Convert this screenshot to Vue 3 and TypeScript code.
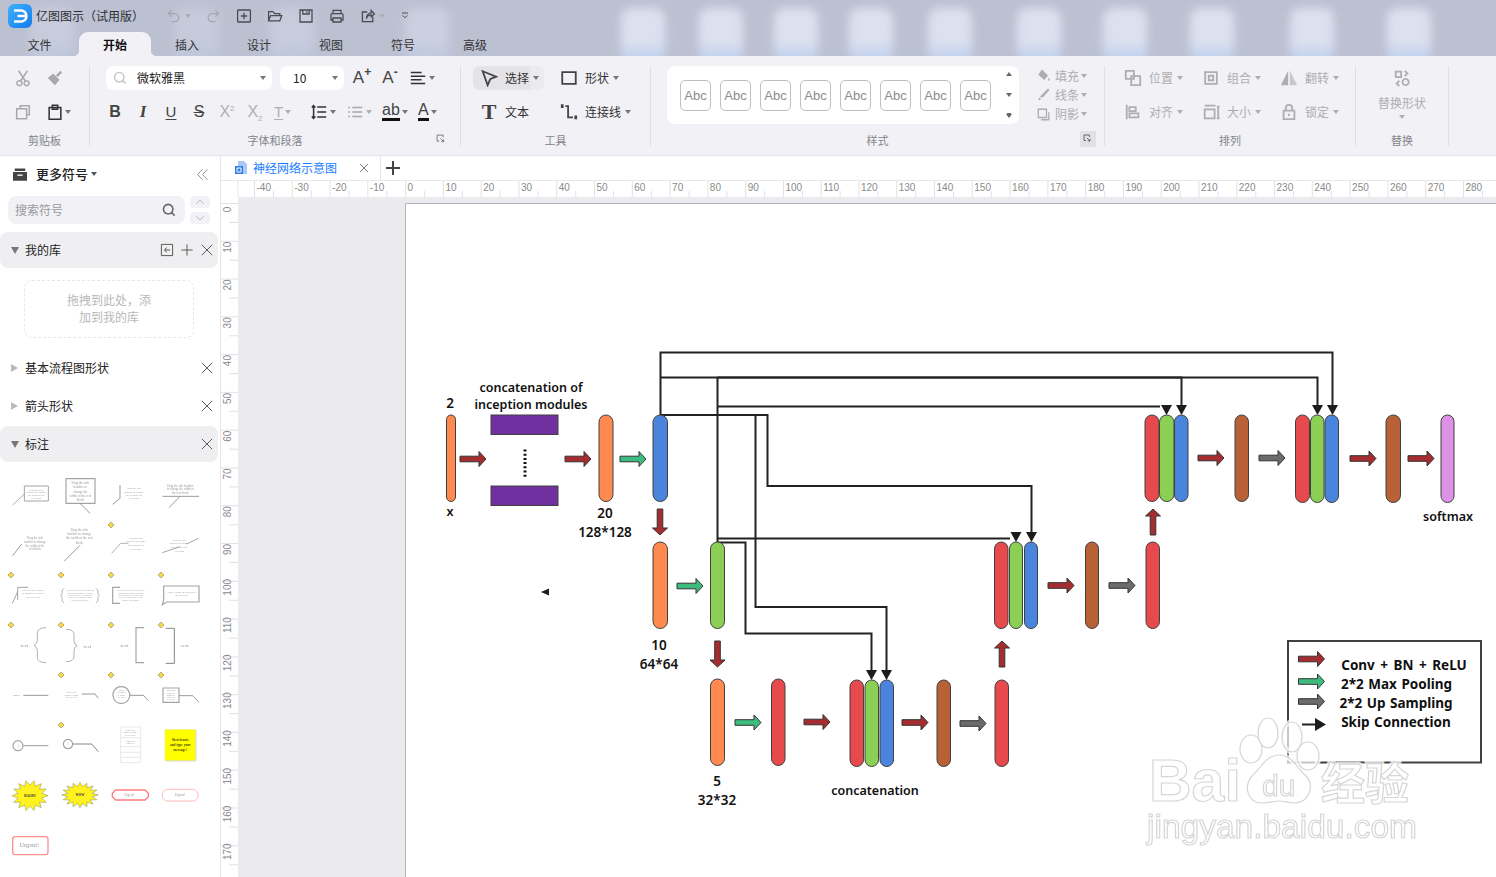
<script setup lang="ts">
// 亿图图示 main window with the neural network diagram open

const I: Record<string, string> = {
  undo: 'M7 3 3 7l4 4M3 7h8a5 5 0 0 1 0 10H7',
  redo: 'M13 3l4 4-4 4M17 7H9a5 5 0 0 0 0 10h4',
  plus: 'M3 2.500h14a1 1 0 0 1 1 1v13a1 1 0 0 1-1 1H3a1 1 0 0 1-1-1v-13a1 1 0 0 1 1-1zM10 6v8M6 10h8',
  open: 'M2 16V4.500h5.500l2 2.500H16v2.500M2 16l2.500-6.500H18.500L16 16z',
  save: 'M2.500 2.500h15v15h-15zM6 2.500v5h8v-5M11 4v2',
  print: 'M5 7V3h10v4M5 15H2.500V8.500a1.500 1.500 0 0 1 1.500-1.500h12a1.500 1.500 0 0 1 1.500 1.500V15H15M5 12.500h10v5H5z',
  share: 'M16 11v6H3V5h6M8 13c0-4 3-7 6-7V3l4 4.500L14 11V8.500c-3 0-5 2-6 4.500z',
  more: 'M5 5h10M6 9l4 4 4-4',
  cut: 'M5 2l7.500 11M15 2 7.500 13M6 13a2.800 2.800 0 1 0 .01 0zM14 13a2.800 2.800 0 1 0 .01 0z',
  brush: 'M2 10l6-5 7 7-5 6zM11 7l5-5 2 2-5 5',
  copy: 'M7 6V3h10v10h-3M3 6.500h11v11H3z',
  paste: 'M3.500 5h13v13h-13zM7 2.500h6V7H7z',
  search: 'M9 3a6 6 0 1 0 .01 0zM13.500 13.500 17 17',
  align: 'M2 4h12M2 8h16M2 12h12M2 16h16',
  spacing: 'M8 4.500h10M8 10h10M8 15.500h10M4 3v14M2 5l2-2 2 2M2 15l2 2 2-2',
  list: 'M7 5h11M7 10h11M7 15h11M2.500 5h2M2.500 10h2M2.500 15h2',
  cursor: 'M3 2.500l15 6-6.500 2.500-3 7z',
  rect: 'M2.500 3.500h15v13h-15z',
  conn: 'M2 2.500h1v2H2zM6 3.500h3V16h5.500M17 15h1v2h-1z',
  expand: 'M2 2h11v4M2 2v11h4M8 8l6 6M14 9.500V14H9.500',
  pos: 'M2 2h9v9H2zM8 8h10v10H8z',
  group: 'M3.500 3.500h13v13h-13zM7.500 7.500h5v5h-5zM3.500 2.500v.1M16.500 2.500v.1M3.500 17.400v.1M16.500 17.400v.1',
  alignl: 'M3 2v16M6 4.500h7v4.500H6zM6 11.500h10v4.500H6z',
  size: 'M3 3h12M3 7h11v10H3zM18 4v13M16.500 4h3M16.500 17h3',
  lock: 'M4 8.500h12v9.500H4zM6.500 8.500V5.500a3.500 3.500 0 0 1 7 0v3M10 12v2.500',
  swap: 'M3 3h6v6H3zM14 11a3.500 3.500 0 1 0 .01 0zM13 2l3 3-3 3M7 13l-3 3 3 3',
  shadow: 'M3 3h11v11H3zM17 7v10H7',
  close: 'M3.500 3.500l13 13M16.500 3.500l-13 13',
  add: 'M10 3v14M3 10h14',
  back: 'M3 3h14v14H3zM14 10H7M9.500 7 7 10l2.500 3',
  fold: 'M10 3 3.500 10l6.500 7M16.500 3 10 10l6.500 7',
  up: 'M3 13l7-7 7 7',
  down: 'M3 7l7 7 7-7',
}

const tabs = ['文件', '开始', '插入', '设计', '视图', '符号', '高级']
const blobs = [
  { x: 621, o: 1 }, { x: 699, o: 1 }, { x: 774, o: 1 }, { x: 849, o: 1 }, { x: 928, o: 1 },
  { x: 1017, o: 1 }, { x: 1103, o: 1 }, { x: 1190, o: 1 }, { x: 1290, o: 1 }, { x: 1387, o: 1 },
  { x: 30, o: 0.35 }, { x: 175, o: 0.3 }, { x: 270, o: 0.35 }, { x: 405, o: 0.45 },
]
const arrange = [
  { icon: 'pos', t: '位置' }, { icon: 'group', t: '组合' }, { icon: 'flip', t: '翻转' },
  { icon: 'alignl', t: '对齐' }, { icon: 'size', t: '大小' }, { icon: 'lock', t: '锁定' },
]
const restyle = [
  { icon: 'bucket', t: '填充' }, { icon: 'pen', t: '线条' }, { icon: 'shadow', t: '阴影' },
]

const topTicks = Array.from({ length: 33 }, (_, i) => ({ v: -40 + i * 10, x: 254.5 + i * 37.78 }))
const leftTicks = Array.from({ length: 18 }, (_, i) => ({ v: i * 10, y: 203.5 + i * 37.78 }))

// diagram, in window coordinates
const ORANGE = '#fe8a50'
const RED = '#e64a4c'
const GREEN = '#8bd055'
const BLUE = '#4a84dc'
const BROWN = '#b86136'
const bars = [
  [446.5, 415, 9, 86.5, ORANGE], [599, 415, 14, 86.5, ORANGE], [653, 415, 14.5, 86.5, BLUE],
  [653, 542, 14.5, 86.5, ORANGE], [710.5, 542, 14, 86.5, GREEN],
  [710.5, 679, 14, 86.5, ORANGE], [771.5, 679, 13.5, 86.5, RED],
  [850, 680, 13.5, 86.5, RED], [865, 680, 13.5, 86.5, GREEN], [880, 680, 13.5, 86.5, BLUE],
  [937, 680, 13.5, 86.5, BROWN], [995, 680, 13.5, 86.5, RED],
  [994.5, 542, 13.5, 86.5, RED], [1009.5, 542, 13, 86.5, GREEN], [1024.5, 542, 13, 86.5, BLUE],
  [1085.5, 542, 13, 86.5, BROWN], [1146, 542, 13.5, 86.5, RED],
  [1145, 415, 14, 86.5, RED], [1159.5, 415, 14.5, 86.5, GREEN], [1174.5, 415, 13.5, 86.5, BLUE],
  [1235, 415, 13.5, 86.5, BROWN],
  [1295.5, 415, 14, 87.5, RED], [1310.5, 415, 13.5, 87.5, GREEN], [1325, 415, 13.5, 87.5, BLUE],
  [1386, 415, 14.5, 87.5, BROWN], [1441, 415, 13, 87.5, '#dd92e6'],
].map(([x, y, w, h, fill]) => ({ x, y, w, h, fill })) as { x: number; y: number; w: number; h: number; fill: string }[]

const C = { r: '#a52d30', g: '#3dbd7d', k: '#6c6c6c' }
const arrows = [
  [473, 459, C.r, 0], [578, 459, C.r, 0], [633, 459, C.g, 0], [660, 522, C.r, 90], [690, 586, C.g, 0],
  [717.5, 654, C.r, 90], [748, 722.5, C.g, 0], [817, 722, C.r, 0], [915, 722.5, C.r, 0], [973, 723.5, C.k, 0],
  [1002, 654, C.r, -90], [1061, 585.5, C.r, 0], [1122, 585.5, C.k, 0], [1153, 522, C.r, -90],
  [1211, 458, C.r, 0], [1272, 458, C.k, 0], [1363, 458.5, C.r, 0], [1421, 458.5, C.r, 0],
  [1311.5, 659, C.r, 0], [1311.5, 681.5, C.g, 0], [1311.5, 701.5, C.k, 0],
].map(([x, y, c, r]) => ({ x, y, c, r })) as { x: number; y: number; c: string; r: number }[]

const skips = [
  'M660.5 415V352.500H1332.500V406',
  'M660.500 377.500H1317.500V406',
  'M717.500 377.500H1181.500V406',
  'M717.500 542V377.500',
  'M717.500 406.500H1160',
  'M660.500 415H767.500V486H1031.500V534',
  'M660.500 415H755.500V607H886.500V671',
  'M717.500 538.500H1010',
  'M717.500 542.500H745.500V633.500H871.500V671',
  'M1302 724.500H1316',
]
const heads = [
  [1166.5, 415], [1181.5, 415], [1317.5, 415], [1332.5, 415],
  [1016, 542], [1031.5, 542], [871.5, 680], [886.5, 680],
].map(([x, y]) => `M${x - 5.5} ${y - 10}h11L${x} ${y}z`)

const labels = [
  ['2', 450, 403], ['concatenation of', 531, 387.5], ['inception modules', 531, 404.5], ['x', 450, 511],
  ['20', 605, 513], ['128*128', 605, 532], ['10', 659, 645], ['64*64', 659, 664], ['5', 717, 781],
  ['32*32', 717, 800], ['concatenation', 875, 790], ['softmax', 1448, 516],
].map(([t, x, y]) => ({ t, x, y, big: /^\d/.test(t as string) })) as { t: string; x: number; y: number; big: boolean }[]
const legend = [
  ['Conv + BN + ReLU', 1404, 665, 2], ['2*2 Max Pooling', 1396.5, 684, 1],
  ['2*2 Up Sampling', 1396, 703, 1], ['Skip Connection', 1396, 722, 1],
].map(([t, x, y, ws]) => ({ t, x, y, ws })) as { t: string; x: number; y: number; ws: number }[]

// shape gallery of the 标注 library, drawn at 3x in its viewBox
function burst(cx: number, cy: number, rx: number, ry: number, n: number) {
  const pts: string[] = []
  for (let i = 0; i < n * 2; i++) {
    const k = i % 2 ? 0.68 : 1
    const a = (Math.PI * i) / n
    pts.push(`${(cx + rx * k * Math.cos(a)).toFixed(1)},${(cy + ry * k * Math.sin(a)).toFixed(1)}`)
  }
  return `M${pts.join('L')}z`
}
const G = '#a3a3a3'
const D = '#858585'
const galleryPaths = [
  { d: 'M73 48H145V93H73z', c: G, w: 3 }, { d: 'M73 72 38 105', c: D, w: 2 },
  { d: 'M198 26H285V100H198z', c: G, w: 3.5 }, { d: 'M240 100 270 130', c: D, w: 2.5 },
  { d: 'M360 45V85L338 103', c: D, w: 2.5 },
  { d: 'M487 79H597M540 79 507 113', c: D, w: 2.5 },
  { d: 'M65 222 38 257', c: D, w: 2.5 }, { d: 'M240 226 193 273', c: D, w: 2.5 },
  { d: 'M335 250 362 220H385', c: G, w: 2.5 }, { d: 'M487 248 540 230M560 222 595 205', c: G, w: 3 },
  { d: 'M85 352H53V390M53 365 37 400', c: G, w: 3 },
  { d: 'M192 355Q186 358 186 368V372L182 376L186 380V388Q186 396 192 398M288 355Q294 358 294 368V372L298 376L294 380V388Q294 396 288 398', c: G, w: 2.5 },
  { d: 'M360 352H338V400H360', c: G, w: 3.5 },
  { d: 'M491 348H597V396H500L487 404 491 390z', c: G, w: 3.5 },
  { d: 'M138 473Q112 473 112 490V510Q112 522 102 526Q112 530 112 542V562Q112 578 138 578', c: G, w: 2.5 },
  { d: 'M198 478Q222 478 222 494V512Q222 524 232 527Q222 530 222 542V560Q222 575 198 575', c: G, w: 2.5 },
  { d: 'M432 473H408V578H432', c: G, w: 3.5 }, { d: 'M497 475H523V580H497', c: D, w: 3 },
  { d: 'M70 676H145', c: D, w: 2.5 }, { d: 'M245 672H285L295 685', c: D, w: 2.5 },
  { d: 'M364 650a25 25 0 1 0 .01 0z', c: G, w: 3.5 }, { d: 'M390 676H430L445 692', c: D, w: 2.5 },
  { d: 'M489 654H537V697H489z', c: G, w: 3.5 }, { d: 'M537 677H578L597 697', c: D, w: 2.5 },
  { d: 'M54 812a15 15 0 1 0 .01 0z', c: G, w: 3.5 }, { d: 'M70 827H145', c: D, w: 2.5 },
  { d: 'M204 808a14 14 0 1 0 .01 0z', c: G, w: 3.5 }, { d: 'M218 822H275L295 845', c: D, w: 3 },
  { d: 'M362 771H421V878H362zM362 803H421M362 830H421M362 847H421M362 862H421', c: '#dcdcdc', w: 2 },
  { d: 'M497 781H588V873H497z', c: '#dddddd', f: '#dddddd', w: 3 },
  { d: 'M495 779H586V871H495z', c: '#e6e646', f: '#ffff00', w: 1 },
  { d: burst(90, 977, 54, 46, 14), c: '#8a8a50', f: '#fff21f', w: 1.5 },
  { d: burst(240, 975, 55, 38, 16), c: '#8a8a50', f: '#fff21f', w: 1.5 },
  { d: 'M347 960H435L445 970V980L435 990H347L337 980V970z', c: '#ff7c7c', w: 4 },
  { d: 'M503 958H578a16 17 0 0 1 0 35H503a16 17 0 0 1 0-35z', c: '#ffb8b8', w: 3 },
  { d: 'M46 1100H136a8 8 0 0 1 8 8V1146a8 8 0 0 1-8 8H46a8 8 0 0 1-8-8V1108a8 8 0 0 1 8-8z', c: '#ff9090', w: 4 },
]
const DRAG = ['Drag the side', 'handles to change', 'the width of the', 'text block']
const blocks = [
  { x: 109, y: 62, s: 8, lh: 8, lines: DRAG }, { x: 241, y: 42, s: 10, lh: 13, lines: ['Drag the side', 'handles to', 'change the', 'width of the text', 'block'] },
  { x: 402, y: 58, s: 8, lh: 10, lines: DRAG }, { x: 541, y: 50, s: 9, lh: 11, lines: ['Drag the side handles', 'to change the width of', 'the text block'] },
  { x: 105, y: 208, s: 9, lh: 11, lines: DRAG }, { x: 238, y: 182, s: 10, lh: 13, lines: ['Drag the side', 'handles to change', 'the width of the text', 'block'] },
  { x: 408, y: 206, s: 8, lh: 11, lines: DRAG }, { x: 537, y: 212, s: 8, lh: 11, lines: DRAG },
  { x: 100, y: 363, s: 7.500, lh: 10, lines: ['Drag the side handles', 'to change the width of', 'the text block'] },
  { x: 240, y: 364, s: 6, lh: 7, lines: ['The text of this callout is large and', 'Drag the side handles to change', 'the width of the text block and', 'the text of this callout is large', 'Drag the side handles'] },
  { x: 392, y: 364, s: 6, lh: 7, lines: ['The text of this callout is large and', 'Drag the side handles to change', 'the width of the text block and', 'the text of this callout is large', 'Drag the side handles'] },
  { x: 545, y: 369, s: 7, lh: 8, lines: ['Drag to change the position of', 'the text block'] },
  { x: 73, y: 530, s: 15, lh: 14, lines: ['text'] }, { x: 262, y: 533, s: 15, lh: 14, lines: ['text'] },
  { x: 373, y: 532, s: 15, lh: 14, lines: ['text'] }, { x: 555, y: 532, s: 15, lh: 14, lines: ['text'] },
  { x: 50, y: 678, s: 8, lh: 8, lines: ['sample'] }, { x: 215, y: 670, s: 6, lh: 7, lines: ['Drag the side', 'handles to change', 'the text block'] },
  { x: 364, y: 663, s: 5.500, lh: 7, lines: ['Drag the', 'side handles', 'to change', 'the block'] },
  { x: 513, y: 664, s: 5.500, lh: 6.500, lines: ['Drag the side', 'handles to', 'change the', 'width of the', 'text block'] },
  { x: 54, y: 831, s: 9, lh: 9, lines: ['1'] }, { x: 204, y: 826, s: 9, lh: 9, lines: ['1'] },
  { x: 391, y: 783, s: 5.500, lh: 7, lines: ['Drag the side', 'handles to change', 'the text block'] },
  { x: 391, y: 816, s: 5.500, lh: 7, lines: ['Drag the side', 'handles to'] },
  { x: 541, y: 813, s: 10.500, lh: 15, c: '#4a4a00', b: 700, lines: ['Sketch note', 'and type your', 'message!'] },
  { x: 90, y: 981, s: 10, lh: 9, c: '#333', b: 700, lines: ['BOOM!'] }, { x: 240, y: 979, s: 10, lh: 9, c: '#333', b: 700, lines: ['WOW'] },
  { x: 388, y: 979, s: 10, lh: 9, lines: ['Urgent!'] }, { x: 540, y: 979, s: 10, lh: 9, lines: ['Urgent!'] },
  { x: 88, y: 1132, s: 19, lh: 18, lines: ['Urgent!'] },
]
const galleryText = blocks.flatMap((b) => b.lines.map((t, i) => ({
  t, x: b.x, y: b.y + i * b.lh, s: b.s, c: b.c ?? '#989898', b: b.b ?? 400,
})))
const diamonds = [
  [333, 165], [33, 315], [183, 315], [333, 315], [483, 315], [33, 465], [183, 465], [333, 465], [483, 465],
  [183, 615], [333, 615], [483, 615], [183, 765],
]
</script>

<template>
  <div class="app">
    <header class="title">
      <i v-for="b in blobs" :key="b.x" class="blob" :style="{ left: b.x + 'px', opacity: b.o }"></i>
      <div class="title-row">
        <span class="logo">
          <svg viewBox="0 0 24 24"><path d="M6 6.500h7a5.500 5.500 0 0 1 0 11H6M9.500 12H18" /></svg>
        </span>
        <span class="app-name">亿图图示（试用版）</span>
        <div class="qat">
          <span class="qb first dim"><svg class="ic" viewBox="0 0 20 20"><path :d="I.undo" /></svg><i class="caret light"></i></span>
          <span class="qb dim"><svg class="ic" viewBox="0 0 20 20"><path :d="I.redo" /></svg></span>
          <span class="qb"><svg class="ic" viewBox="0 0 20 20"><path :d="I.plus" /></svg></span>
          <span class="qb"><svg class="ic" viewBox="0 0 20 20"><path :d="I.open" /></svg></span>
          <span class="qb"><svg class="ic" viewBox="0 0 20 20"><path :d="I.save" /></svg></span>
          <span class="qb"><svg class="ic" viewBox="0 0 20 20"><path :d="I.print" /></svg></span>
          <span class="qb wide"><svg class="ic" viewBox="0 0 20 20"><path :d="I.share" /></svg><i class="caret light"></i></span>
          <span class="qb"><svg class="ic small" viewBox="0 0 20 20"><path :d="I.more" /></svg></span>
        </div>
      </div>
      <nav class="tabs">
        <span v-for="t in tabs" :key="t" class="tab" :class="{ active: t === '开始' }">{{ t }}</span>
      </nav>
    </header>

    <section class="ribbon">
      <div class="grp g-clip">
        <div class="rows">
          <div class="row dim">
            <span class="ib"><svg class="ic" viewBox="0 0 20 20"><path :d="I.cut" /></svg></span>
            <span class="ib"><svg class="ic" viewBox="0 0 20 20"><path class="solid" :d="I.brush" /></svg></span>
          </div>
          <div class="row">
            <span class="ib dim"><svg class="ic" viewBox="0 0 20 20"><path :d="I.copy" /></svg></span>
            <span class="ib c"><svg class="ic" viewBox="0 0 20 20"><path :d="I.paste" /></svg><i class="caret"></i></span>
          </div>
        </div>
        <div class="glabel">剪贴板</div>
      </div>
      <i class="sep"></i>

      <div class="grp g-font">
        <div class="rows">
          <div class="row">
            <div class="sel font">
              <svg class="ic sicon" viewBox="0 0 20 20"><path :d="I.search" /></svg>
              <span>微软雅黑</span><i class="caret push"></i>
            </div>
            <div class="sel size"><span>10</span><i class="caret push"></i></div>
            <span class="ib grow"><span class="glyph">A<sup>+</sup></span></span>
            <span class="ib grow"><span class="glyph">A<sup>-</sup></span></span>
            <span class="ib c"><svg class="ic" viewBox="0 0 20 20"><path :d="I.align" /></svg><i class="caret"></i></span>
          </div>
          <div class="row fmt">
            <span class="ib"><b class="glyph">B</b></span>
            <span class="ib"><i class="glyph it">I</i></span>
            <span class="ib"><span class="glyph un">U</span></span>
            <span class="ib"><span class="glyph st">S</span></span>
            <span class="ib dim"><span class="glyph">X<sup>2</sup></span></span>
            <span class="ib dim"><span class="glyph">X<sub>2</sub></span></span>
            <span class="ib c dim"><span class="glyph un thin">T</span><i class="caret light"></i></span>
            <span class="ib c"><svg class="ic" viewBox="0 0 20 20"><path :d="I.spacing" /></svg><i class="caret"></i></span>
            <span class="ib c dim"><svg class="ic" viewBox="0 0 20 20"><path :d="I.list" /></svg><i class="caret light"></i></span>
            <span class="ib c"><span class="glyph bar">ab</span><i class="caret"></i></span>
            <span class="ib c"><span class="glyph bar">A</span><i class="caret"></i></span>
          </div>
        </div>
        <div class="glabel">字体和段落
          <svg class="ic corner" viewBox="0 0 20 20"><path :d="I.expand" /></svg>
        </div>
      </div>
      <i class="sep"></i>

      <div class="grp g-tool">
        <div class="rows">
          <div class="row">
            <span class="tool first on"><svg class="ic heavy" viewBox="0 0 20 20"><path :d="I.cursor" /></svg><em>选择</em><i class="caret"></i></span>
            <span class="tool"><svg class="ic heavy" viewBox="0 0 20 20"><path :d="I.rect" /></svg><em>形状</em><i class="caret"></i></span>
          </div>
          <div class="row">
            <span class="tool first"><span class="glyph big-t">T</span><em>文本</em></span>
            <span class="tool"><svg class="ic heavy" viewBox="0 0 20 20"><path :d="I.conn" /></svg><em>连接线</em><i class="caret"></i></span>
          </div>
        </div>
        <div class="glabel">工具</div>
      </div>
      <i class="sep"></i>

      <div class="grp g-style">
        <div class="style-row">
          <div class="gallery-panel">
            <span v-for="n in 8" :key="n" class="abc">Abc</span>
            <div class="scroll">
              <i class="caret upc"></i><i class="caret"></i><i class="caret lined"></i>
            </div>
          </div>
          <div class="restyle">
            <span v-for="r in restyle" :key="r.t" class="rs">
              <svg v-if="r.icon === 'bucket'" class="ic" viewBox="0 0 20 20"><path class="solid" d="M8 2l8 8-5 6-8-7zM17 13c1 1.500 2 3 .5 4s-2-2.500-.5-4z" /></svg>
              <svg v-else-if="r.icon === 'pen'" class="ic" viewBox="0 0 20 20"><path class="solid" d="M16 2l2 2-9 10-4-1zM4 14l3 2-4 2z" /></svg>
              <svg v-else class="ic" viewBox="0 0 20 20"><path :d="I.shadow" /></svg>
              <em>{{ r.t }}</em><i class="caret light"></i>
            </span>
          </div>
        </div>
        <div class="glabel">样式
          <span class="corner-box"><svg class="ic" viewBox="0 0 20 20"><path :d="I.expand" /></svg></span>
        </div>
      </div>
      <i class="sep"></i>

      <div class="grp g-arrange">
        <div class="arr-grid">
          <span v-for="a in arrange" :key="a.t" class="tool grey">
            <svg v-if="a.icon === 'flip'" class="ic" viewBox="0 0 20 20"><path class="solid" d="M9 2v16H1z" /><path class="solid half" d="M11 2v16h8z" /></svg>
            <svg v-else class="ic heavy" viewBox="0 0 20 20"><path :d="I[a.icon]" /></svg>
            <em>{{ a.t }}</em><i class="caret light"></i>
          </span>
        </div>
        <div class="glabel">排列</div>
      </div>
      <i class="sep"></i>

      <div class="grp g-swap">
        <div class="swap">
          <svg class="ic heavy" viewBox="0 0 20 20"><path :d="I.swap" /></svg>
          <span>替换形状</span>
          <i class="caret light"></i>
        </div>
        <div class="glabel">替换</div>
      </div>
      <i class="sep"></i>
    </section>

    <div class="work">
      <aside class="side">
        <div class="side-head">
          <svg class="box" viewBox="0 0 16 14"><path d="M2 0h12v3H2zM0 4h16v10H0z" /><path class="slot" d="M5 7h6v1.500H5z" /></svg>
          <span class="more">更多符号</span><i class="caret dark"></i>
          <svg class="ic fold" viewBox="0 0 20 20"><path :d="I.fold" /></svg>
        </div>
        <div class="search-row">
          <div class="search">
            <span>搜索符号</span>
            <svg class="ic" viewBox="0 0 20 20"><path :d="I.search" /></svg>
          </div>
          <div class="updown">
            <span><svg class="ic" viewBox="0 0 20 20"><path :d="I.up" /></svg></span>
            <span><svg class="ic" viewBox="0 0 20 20"><path :d="I.down" /></svg></span>
          </div>
        </div>

        <div class="sec open first">
          <i class="tri down"></i><span class="name">我的库</span>
          <svg class="ic act" viewBox="0 0 20 20"><path :d="I.back" /></svg>
          <svg class="ic act" viewBox="0 0 20 20"><path :d="I.add" /></svg>
          <svg class="ic act" viewBox="0 0 20 20"><path :d="I.close" /></svg>
        </div>
        <div class="drop">拖拽到此处，添<br />加到我的库</div>
        <div class="sec after-drop">
          <i class="tri"></i><span class="name">基本流程图形状</span>
          <svg class="ic act" viewBox="0 0 20 20"><path :d="I.close" /></svg>
        </div>
        <div class="sec">
          <i class="tri"></i><span class="name">箭头形状</span>
          <svg class="ic act" viewBox="0 0 20 20"><path :d="I.close" /></svg>
        </div>
        <div class="sec open">
          <i class="tri down"></i><span class="name">标注</span>
          <svg class="ic act" viewBox="0 0 20 20"><path :d="I.close" /></svg>
        </div>

        <svg class="shapes" viewBox="0 0 660 1221" font-family="'Liberation Serif', serif" text-anchor="middle">
          <path v-for="(p, i) in galleryPaths" :key="i" :d="p.d" :stroke="p.c" :stroke-width="p.w" :fill="p.f ?? 'none'" />
          <text v-for="(t, i) in galleryText" :key="'t' + i" :x="t.x" :y="t.y" :font-size="t.s" :fill="t.c" :font-weight="t.b">{{ t.t }}</text>
          <path v-for="d in diamonds" :key="d.join()" :d="`M${d[0]} ${d[1] - 9}l9 9-9 9-9-9z`" fill="#f7d84a" stroke="#77725a" stroke-width="1.500" />
        </svg>
      </aside>

      <main class="main">
        <div class="doc-tabs">
          <div class="doc-tab">
            <svg class="doc-ic" viewBox="0 0 14 14"><path d="M4 0h6l3 3v10H4z" fill="#a9c8f5" /><path d="M1 5h8v8H1z" fill="#2f7ee6" /><path d="M3 7h4v4H3z" fill="none" stroke="#fff" /></svg>
            <span>神经网络示意图</span>
            <svg class="ic x" viewBox="0 0 20 20"><path :d="I.close" /></svg>
          </div>
          <svg class="ic new" viewBox="0 0 20 20"><path :d="I.add" /></svg>
        </div>

        <svg class="ruler-top" viewBox="221 181 1275 16" font-family="'Liberation Sans', sans-serif" font-size="10">
          <path d="M238 181V197" stroke="#e6e6ea" />
          <g v-for="t in topTicks" :key="t.v">
            <path :d="`M${t.x} 181V197M${t.x + 19} 191V197`" stroke="#e2e2e6" />
            <text :x="t.x + 2" y="191" fill="#8a8a8a">{{ t.v }}</text>
          </g>
        </svg>

        <div class="stage">
          <svg class="ruler-left" viewBox="221 197 17 680" font-family="'Liberation Sans', sans-serif" font-size="10">
            <g v-for="t in leftTicks" :key="t.v">
              <path :d="`M221 ${t.y}H238M229 ${t.y + 19}H238`" stroke="#e2e2e6" />
              <text :transform="`translate(230.500 ${t.y + 6}) rotate(-90)`" text-anchor="middle" fill="#8a8a8a">{{ t.v }}</text>
            </g>
          </svg>
          <div class="canvas">
            <div class="page">
              <svg class="diagram" viewBox="406 204 1090 673">
                <defs>
                  <filter id="soft" x="-5%" y="-5%" width="110%" height="110%"><feGaussianBlur stdDeviation="0.4" /></filter>
                </defs>
                <rect x="1288" y="641" width="193" height="121.500" fill="#fff" stroke="#404040" stroke-width="2" />
                <path v-for="(d, i) in skips" :key="i" :d="d" fill="none" stroke="#222" stroke-width="2" />
                <path v-for="(d, i) in heads" :key="'h' + i" :d="d" fill="#1c1c1c" />
                <path d="M1315 718l11 6.500-11 6.500z" fill="#1c1c1c" />
                <path d="M541 592l8-3.500v7z" fill="#1c1c1c" />
                <rect x="491" y="415" width="67" height="19.500" fill="#7030a0" stroke="#404040" />
                <rect x="491" y="486" width="67" height="19.500" fill="#7030a0" stroke="#404040" />
                <path d="M525 449.500V477" stroke="#111" stroke-width="3" stroke-dasharray="2 2.200" />
                <rect v-for="(b, i) in bars" :key="'b' + i" :x="b.x" :y="b.y" :width="b.w" :height="b.h" :rx="b.w / 2" :fill="b.fill" stroke="#404040" />
                <path
                  v-for="(a, i) in arrows" :key="'a' + i"
                  d="M-13-2.800H6V-7.500L13 0 6 7.500V2.800H-13z"
                  :transform="`translate(${a.x} ${a.y}) rotate(${a.r})`"
                  :fill="a.c" stroke="#333"
                />
                <text v-for="l in labels" :key="l.t" class="dtext" :class="{ big: l.big }" :x="l.x" :y="l.y">{{ l.t }}</text>
                <text v-for="l in legend" :key="l.t" class="dtext big strong" :x="l.x" :y="l.y" :word-spacing="l.ws">{{ l.t }}</text>

                <g v-for="layer in ['halo', 'mark']" :key="layer" :class="layer">
                  <ellipse cx="1251" cy="749" rx="11" ry="14" />
                  <ellipse cx="1268" cy="733" rx="10" ry="15" />
                  <ellipse cx="1292" cy="737" rx="10" ry="15" />
                  <ellipse cx="1308" cy="756" rx="11" ry="14" />
                  <path d="M1279 755c13 0 18 13 27 21 9 10 3 27-12 27-6 0-10-2-15-2s-10 2-17 2c-14 0-19-16-10-27 9-8 14-21 27-21z" />
                  <text x="1149" y="801" font-size="59" font-weight="700">Bai</text>
                  <text x="1262" y="796" font-size="30">du</text>
                  <text x="1321" y="800" font-size="44" font-family="'Noto Sans CJK SC', sans-serif" font-weight="700">经验</text>
                  <text x="1147" y="838" font-size="33.500">jingyan.baidu.com</text>
                </g>
              </svg>
            </div>
          </div>
        </div>
      </main>
    </div>
  </div>
</template>

<style scoped>
.app {
  width: 1496px;
  height: 877px;
  overflow: hidden;
  background: #fff;
  color: #333;
  font: 12px/16px "Noto Sans CJK SC", "Liberation Sans", sans-serif;
}
em { font-style: normal; }

.ic { width: 16px; height: 16px; flex: none; fill: none; stroke: currentColor; stroke-width: 1.6; }
.ic .solid { fill: currentColor; stroke: none; }
.ic .half { opacity: 0.6; }
.caret {
  display: inline-block;
  flex: none;
  width: 0;
  height: 0;
  border: 3.5px solid transparent;
  border-top: 4px solid #777;
  border-bottom: 0;
}
.caret.light { border-top-color: #aeaeae; }
.caret.dark { border-top-color: #555; }
.caret.push { margin-left: auto; }
.dim { color: #a9a9a9; }

.title { position: relative; height: 56px; background: #bcc1d2; overflow: hidden; }
.blob {
  position: absolute;
  top: 8px;
  width: 44px;
  height: 56px;
  border-radius: 10px;
  background: linear-gradient(#dde0ef 62%, #c4d3ee 82%);
  filter: blur(5px);
}
.title-row { position: relative; display: flex; align-items: center; height: 32px; padding-left: 8px; }
.logo {
  width: 24px;
  height: 24px;
  border-radius: 6px;
  background: linear-gradient(135deg, #3eb3fb, #1579ee);
}
.logo svg { display: block; fill: none; stroke: #fff; stroke-width: 2.4; }
.app-name { width: 130px; margin-left: 4px; color: #2d2d33; }
.qat { display: flex; align-items: center; color: #4a4a52; }
.qb { display: flex; align-items: center; justify-content: center; width: 31px; box-sizing: border-box; }
.qb.dim { color: #a3a6b5; }
.qb.first { justify-content: flex-start; gap: 3px; width: 31.500px; }
.qb.wide { justify-content: flex-start; gap: 3px; width: 37px; padding-left: 7.500px; }
.ic.small { width: 12px; height: 12px; }

.tabs { position: relative; display: flex; height: 24px; }
.tab { width: 72px; line-height: 25px; text-align: center; color: #333; }
.tab:first-child { width: 79px; }
.tab.active {
  position: relative;
  background: #f1f1f6;
  border-radius: 9px 9px 0 0;
  color: #111;
  font-weight: 700;
}
.tab.active::before,
.tab.active::after {
  content: "";
  position: absolute;
  bottom: 0;
  width: 6px;
  height: 6px;
}
.tab.active::before { left: -6px; background: radial-gradient(circle at 0 0, transparent 6px, #f1f1f6 6.500px); }
.tab.active::after { right: -6px; background: radial-gradient(circle at 100% 0, transparent 6px, #f1f1f6 6.500px); }

.ribbon {
  display: flex;
  height: 100px;
  padding-top: 10px;
  box-sizing: border-box;
  background: #f1f1f6;
  border-bottom: 1px solid #e4e4e9;
}
.ribbon .ic { width: 18px; height: 18px; stroke-width: 1.7; }
.ribbon .ic.heavy { stroke-width: 2; }
.sep { width: 1px; height: 80px; background: #dfdfe4; flex: none; }
.grp { display: flex; flex-direction: column; flex: none; }
.rows { display: flex; flex-direction: column; gap: 10px; }
.row { display: flex; align-items: center; height: 24px; }
.glabel { position: relative; height: 16px; margin-top: 8px; font-size: 11px; text-align: center; color: #85858a; }

.g-clip { width: 89px; }
.g-clip .rows { padding-left: 7px; }
.g-font { width: 370px; }
.g-font .rows { padding-left: 16px; }
.g-tool { width: 189px; }
.g-tool .rows { padding-left: 12px; }
.g-style { width: 453px; }
.g-arrange { width: 250px; }
.g-swap { width: 92px; }

.ib { display: flex; align-items: center; justify-content: center; flex: none; width: 32px; height: 24px; gap: 2px; }
.g-clip .ib.c { position: relative; }
.g-clip .ib.c .caret { position: absolute; left: 26px; top: 10px; }
.g-font .ib { width: 28px; }
.g-font .ib.c { width: 36px; justify-content: flex-start; padding-left: 5px; box-sizing: border-box; }
.fmt { margin-left: -5px; }
.sel {
  display: flex;
  align-items: center;
  flex: none;
  height: 24px;
  box-sizing: border-box;
  background: #fff;
  border-radius: 7px;
  color: #222;
}
.sel.font { width: 166px; padding: 0 6px 0 6px; margin-right: 8px; }
.ribbon .sicon { width: 16px; height: 16px; color: #c4c4c4; margin-right: 9px; }
.sel.size { width: 64px; padding: 0 6px 0 13px; margin-right: 4px; }

.glyph { font: 700 16px/16px "Liberation Sans", sans-serif; color: #444; }
.dim .glyph { color: #b0b0b0; font-weight: 400; font-size: 16px; }
.glyph sup, .glyph sub { font-size: 8px; line-height: 0; }
.grow .glyph { font-size: 17px; font-weight: 400; }
.grow sup { font-size: 12px; font-weight: 700; }
.glyph.it { font-family: "Liberation Serif", serif; font-size: 17px; font-style: italic; }
.glyph.un { font-weight: 400; font-size: 15px; text-decoration: underline; text-underline-offset: 2px; }
.glyph.thin { font-size: 15px; }
.glyph.st { font-weight: 400; font-size: 16px; text-decoration: line-through; }
.glyph.bar { font-weight: 400; font-size: 16px; line-height: 14px; padding-bottom: 1px; border-bottom: 3px solid #111; }
.big-t { width: 16px; font: 700 22px/18px "Liberation Serif", serif; text-align: center; }

.tool { display: flex; align-items: center; flex: none; height: 24px; box-sizing: border-box; padding-left: 8px; gap: 8px; color: #444; }
.tool .ic { margin: 0 -1px; }
.tool em { color: #333; }
.tool .caret { margin-left: -4px; }
.tool.first { width: 71px; margin-right: 9px; border-radius: 6px; }
.tool.on { background: linear-gradient(90deg, #e4e4e8 80%, #ebebef 80%); }

.style-row { display: flex; height: 58px; padding-left: 16px; }
.gallery-panel {
  display: flex;
  align-items: center;
  gap: 9px;
  width: 352px;
  box-sizing: border-box;
  padding: 0 0 0 13px;
  background: #fff;
  border-radius: 8px;
}
.abc {
  width: 31px;
  height: 31px;
  flex: none;
  box-sizing: border-box;
  border: 1px solid #bfbfbf;
  border-radius: 5px;
  font: 13px/29px "Liberation Sans", sans-serif;
  text-align: center;
  color: #8c8c8c;
}
.scroll { display: flex; flex-direction: column; align-items: center; justify-content: space-between; height: 46px; margin-left: 6px; }
.scroll .caret { border-top-color: #666; }
.scroll .caret.upc { border-top: 0; border-bottom: 4px solid #666; }
.scroll .caret.lined { box-shadow: 0 -2px 0 -1px #666; }
.restyle { display: flex; flex-direction: column; justify-content: center; width: 67px; padding-left: 17px; }
.rs { display: flex; align-items: center; height: 20px; gap: 4px; color: #aeaeae; }
.ribbon .rs .ic { width: 15px; height: 15px; }
.rs em { color: #aeaeae; }
.rs .caret { margin-left: -2px; }
.ribbon .glabel .corner { position: absolute; left: 346px; top: 2px; width: 11px; height: 11px; color: #777; }
.corner-box {
  position: absolute;
  left: 429px;
  top: -1px;
  display: flex;
  align-items: center;
  justify-content: center;
  width: 16px;
  height: 16px;
  background: #e2e2e6;
  color: #555;
}
.ribbon .corner-box .ic { width: 10px; height: 10px; }

.arr-grid { display: grid; grid-template-columns: repeat(3, 78px); grid-auto-rows: 24px; row-gap: 10px; padding-left: 12px; }
.tool.grey { color: #aeaeae; }
.tool.grey em { color: #aeaeae; }
.swap { display: flex; flex-direction: column; align-items: center; height: 58px; color: #aeaeae; }
.swap .ic { margin-top: 3px; }
.swap span { margin-top: 8px; }
.swap .caret { margin-top: 4px; }

.work { display: flex; height: 721px; }
.side { width: 220px; flex: none; overflow: hidden; border-right: 1px solid #e6e6ea; }
.side-head { display: flex; align-items: center; height: 36px; margin-bottom: 4px; padding-left: 13px; }
.box { width: 14px; height: 13px; fill: #444; }
.box .slot { fill: #fff; }
.more { margin: 0 3px 0 9px; font-size: 13px; font-weight: 500; color: #222; }
.fold { margin-left: auto; margin-right: 10px; width: 15px; height: 15px; color: #888; stroke-width: 1.2; }
.search-row { display: flex; gap: 5px; padding-left: 8px; }
.search {
  display: flex;
  align-items: center;
  justify-content: space-between;
  width: 177px;
  height: 28px;
  box-sizing: border-box;
  padding: 0 8px 0 7px;
  background: #f1f1f6;
  border-radius: 8px;
  color: #9a9a9a;
}
.search .ic { color: #666; stroke-width: 2; }
.updown { display: flex; flex-direction: column; gap: 4px; }
.updown span {
  display: flex;
  align-items: center;
  justify-content: center;
  width: 20px;
  height: 12px;
  background: #f1f1f6;
  border-radius: 4px;
  color: #999;
}
.updown .ic { width: 10px; height: 10px; stroke-width: 1.4; }
.sec { display: flex; align-items: center; width: 218px; height: 36px; margin-top: 2px; padding: 0 3px 0 11px; box-sizing: border-box; border-radius: 8px; }
.sec.first { margin-top: 8px; }
.sec.after-drop { margin-top: 12px; }
.sec.open { background: #efeff1; }
.tri { width: 0; height: 0; border: 4.500px solid transparent; border-left: 7px solid #bbb; border-right: 0; }
.tri.down { border: 4px solid transparent; border-top: 7px solid #777; border-bottom: 0; }
.name { margin-left: 6px; margin-right: auto; color: #222; }
.tri:not(.down) + .name { margin-left: 7px; }
.act { width: 16px; height: 16px; margin-left: 4px; color: #555; stroke-width: 1.2; }
.drop {
  width: 170px;
  height: 58px;
  margin: 12px 0 0 24px;
  box-sizing: border-box;
  padding-top: 10px;
  line-height: 17px;
  border: 1px dashed #e8e8e8;
  border-radius: 8px;
  color: #b8b8b8;
  text-align: center;
}
.shapes { display: block; width: 220px; height: 407px; margin-top: 8px; filter: blur(0.3px); }

.main { flex: 1; min-width: 0; }
.doc-tabs { display: flex; align-items: center; height: 25px; border-bottom: 1px solid #e8e8ec; box-sizing: border-box; }
.doc-tab {
  display: flex;
  align-items: center;
  width: 160px;
  height: 24px;
  box-sizing: border-box;
  padding-left: 13px;
  border-right: 1px solid #e8e8ec;
  color: #1a7dff;
}
.doc-ic { width: 14px; height: 14px; margin-right: 5px; }
.x { width: 12px; height: 12px; margin-left: auto; margin-right: 10px; color: #666; stroke-width: 1.5; }
.new { width: 20px; height: 20px; margin-left: 2px; color: #444; stroke-width: 2; }
.ruler-top { display: block; width: 1275px; height: 16px; }
.stage { display: flex; height: 680px; }
.ruler-left { display: block; flex: none; width: 17px; height: 680px; }
.canvas { flex: 1; min-width: 0; overflow: hidden; background: #eaeaef; padding: 6px 0 0 167px; box-sizing: border-box; }
.page { background: #fff; height: 690px; border: 1px solid #b4b4b8; border-right: 0; }
.diagram { display: block; width: 1090px; height: 673px; }
.dtext {
  font: 600 12.500px "Noto Sans", sans-serif;
  fill: #111;
  text-anchor: middle;
  dominant-baseline: central;
}
.dtext.big { font-size: 13.500px; }
.dtext.strong { font-weight: 700; }
.mark { fill: #fff; fill-opacity: 0.7; stroke: #d6d6d6; stroke-width: 1.200; font-family: "Liberation Sans", sans-serif; filter: url(#soft); }
.halo { fill: none; stroke: #fff; stroke-width: 5; stroke-opacity: 0.75; font-family: "Liberation Sans", sans-serif; }
</style>

<style>
html, body { margin: 0; background: #fff; }
</style>
